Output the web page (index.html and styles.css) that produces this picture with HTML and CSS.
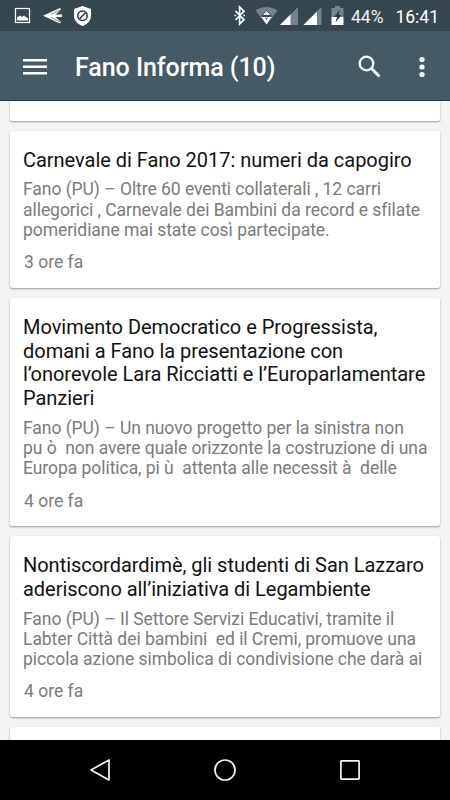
FILE: index.html
```html
<!DOCTYPE html>
<html lang="it">
<head>
<meta charset="utf-8">
<meta name="viewport" content="width=device-width, initial-scale=1">
<title>Fano Informa</title>
<link rel="stylesheet" href="styles.css">
</head>
<body>
<div class="screen">
  <div class="status">
    <svg class="status-icons" width="80" height="31" viewBox="0 0 80 31">
      <rect x="1.500" y="8.500" width="14" height="14" fill="none" stroke="#fff" stroke-width="1.200"/>
      <path d="M3 20.500v-3l3-2 2 1.500 2-1.500 4 3v2z" fill="#fff"/>
      <path d="M29 15.800 46 8l1 1.500-5.500 5h6.500v2.500h-6.500l5.500 5-1 1.500z" fill="#fff"/>
      <path d="m37 14.300 9-4.500m-9 7.500 9 4.500" stroke="#37474f" stroke-width=".6"/>
      <path d="M68.500 6 77 9v7c0 4.500-3.500 8-8.500 10-5-2-8.500-5.500-8.500-10V9z" fill="#fff"/>
      <circle cx="68.500" cy="15.700" r="4.700" fill="none" stroke="#263840" stroke-width="1.500"/>
      <path d="m65.500 18.700 6-6" stroke="#263840" stroke-width="1.600"/>
    </svg>
    <svg class="status-signals" width="112" height="31" viewBox="0 0 112 31">
      <path d="m2.500 11 8.500 8.800-4.400 4.200V7l4.400 4.200L2.500 20" fill="none" stroke="#fff" stroke-width="1.700"/>
      <path d="M1.500 15.500h1.500m7.500 0h1.500" stroke="#fff" stroke-width="1.500"/>
      <path d="M22.500 10.500c6-4.700 16-4.700 22 0l-11 14.500z" fill="#76848a"/>
      <path d="M28.500 15.500 33.500 10l5 5.500-1 3-4 6.500-4-6.500z" fill="#37474f"/>
      <path d="m30 15 3.500-4 3.500 4zm-1.500 2h10l-5 7.500z" fill="#fff"/>
      <path d="M32 17.800h3l-1.500 2z" fill="#37474f"/>
      <path d="M65 7v18H47z" fill="#76848a"/><path d="M57.500 14.500V25H47z" fill="#fff"/>
      <path d="M88.500 7v18h-18z" fill="#76848a"/><path d="M84 11.500V25H70.500z" fill="#fff"/>
      <path d="M98.500 8h3.500V6h5v2h3.500v9h-12z" fill="#76848a"/>
      <path d="M98.500 17h12v8h-12z" fill="#fff"/>
      <path d="m107 9.500-6 7.500h3l-1.500 5.500 6-7.500h-3z" fill="#2a3a42"/>
    </svg>
    <span class="battery">44%</span>
    <span class="clock">16:41</span>
  </div>
  <header class="bar">
    <svg class="menu" width="24" height="18" viewBox="0 0 24 18"><path d="M0 2.200h24M0 8.700h24M0 15.200h24" stroke="#fff" stroke-width="2.500"/></svg>
    <h1 class="bar-title">Fano Informa (10)</h1>
    <svg class="search" width="24" height="24" viewBox="0 0 24 24"><circle cx="8.500" cy="8.500" r="6.800" fill="none" stroke="#fff" stroke-width="2.300"/><path d="m13.500 13.500 8 8" stroke="#fff" stroke-width="2.900"/></svg>
    <svg class="more" width="6" height="22" viewBox="0 0 6 22"><g fill="#fff"><circle cx="3" cy="3.500" r="2.600"/><circle cx="3" cy="11" r="2.600"/><circle cx="3" cy="18.500" r="2.600"/></g></svg>
  </header>
  <main class="feed">
    <div class="card card-previous"></div>
    <article class="card">
      <h2 class="title">Carnevale di Fano 2017: numeri da capogiro</h2>
      <p class="summary">Fano (PU) – Oltre 60 eventi collaterali , 12 carri<br>allegorici , Carnevale dei Bambini da record e sfilate<br>pomeridiane mai state così partecipate.</p>
      <p class="time">3 ore fa</p>
    </article>
    <article class="card">
      <h2 class="title">Movimento Democratico e Progressista,<br>domani a Fano la presentazione con<br>l’onorevole Lara Ricciatti e l’Europarlamentare<br>Panzieri</h2>
      <p class="summary">Fano (PU) – Un nuovo progetto per la sinistra non<br>pu ò  non avere quale orizzonte la costruzione di una<br>Europa politica, pi ù  attenta alle necessit à  delle</p>
      <p class="time">4 ore fa</p>
    </article>
    <article class="card">
      <h2 class="title">Nontiscordardimè, gli studenti di San Lazzaro<br>aderiscono all’iniziativa di Legambiente</h2>
      <p class="summary">Fano (PU) – Il Settore Servizi Educativi, tramite il<br>Labter Città dei bambini  ed il Cremi, promuove una<br>piccola azione simbolica di condivisione che darà ai</p>
      <p class="time">4 ore fa</p>
    </article>
    <div class="card card-next"></div>
  </main>
  <nav class="nav">
    <svg width="22" height="24" viewBox="0 0 22 24"><path d="M20 2v20L2 12z"/></svg>
    <svg width="24" height="24" viewBox="0 0 24 24"><circle cx="12" cy="12" r="10"/></svg>
    <svg width="22" height="24" viewBox="0 0 22 24"><rect x="1.900" y="2.900" width="18.200" height="18.200" rx=".5"/></svg>
  </nav>
</div>
</body>
</html>
```

FILE: styles.css
```css
* { box-sizing: border-box; }
body { margin: 0; font-family: Roboto, sans-serif; }
h1, h2, p { margin: 0; }
svg { display: block; flex: none; }

.screen {
  width: 450px;
  height: 800px;
  display: flex;
  flex-direction: column;
  overflow: hidden;
  background: #f3f3f3;
}
.status {
  height: 31px;
  flex: none;
  display: flex;
  align-items: center;
  padding: 0 11px 0 14px;
  background: #37474f;
  color: #fff;
  font-size: 17.5px;
  line-height: 29px;
  white-space: nowrap;
}
.status-signals { margin-left: 139px; }
.battery { width: 33px; margin-left: 6px; padding-top: 3px; color: #f2f4f5; }
.clock { margin-left: auto; padding-top: 3px; font-size: 17.5px; }

.bar {
  height: 70px;
  flex: none;
  display: flex;
  align-items: center;
  padding: 2px 25px 0 23px;
  background: #455a64;
  border-bottom: 1px solid #0b3f53;
  color: #fff;
}
.bar-title {
  margin-left: 28px;
  padding-top: 3px;
  font-size: 25px;
  font-weight: 500;
  line-height: 30px;
  letter-spacing: -.05px;
  white-space: nowrap;
}
.search { margin-left: auto; }
.more { margin-left: 37.500px; }

.feed {
  height: 639px;
  flex: none;
  display: flex;
  flex-direction: column;
  gap: 10px;
  padding: 0 10px;
  overflow: hidden;
}
.card {
  flex: none;
  padding: 18.200px 13px 15.200px;
  background: #fff;
  border-radius: 2.500px;
  box-shadow: 0 1px 2px rgba(0, 0, 0, .36);
}
.card-previous { height: 19.700px; padding: 0; border-radius: 0 0 2.500px 2.500px; }
.card-next { height: 60px; padding: 0; }
.title {
  color: #111;
  font-size: 20px;
  font-weight: 400;
  line-height: 23.700px;
  letter-spacing: -.03px;
  white-space: pre;
}
.summary {
  margin-top: 6.800px;
  color: #7b7b7b;
  font-size: 17.500px;
  line-height: 20.400px;
  letter-spacing: -.05px;
  white-space: pre;
}
.time {
  margin-top: 11.700px;
  padding-left: 1px;
  color: #7b7b7b;
  font-size: 17.500px;
  line-height: 20.400px;
}
.nav {
  height: 60px;
  flex: none;
  display: flex;
  align-items: center;
  justify-content: space-between;
  padding: 0 89px;
  background: #000;
}
.nav svg { fill: none; stroke: #f5f5f5; stroke-width: 1.700; stroke-linejoin: round; }
```
